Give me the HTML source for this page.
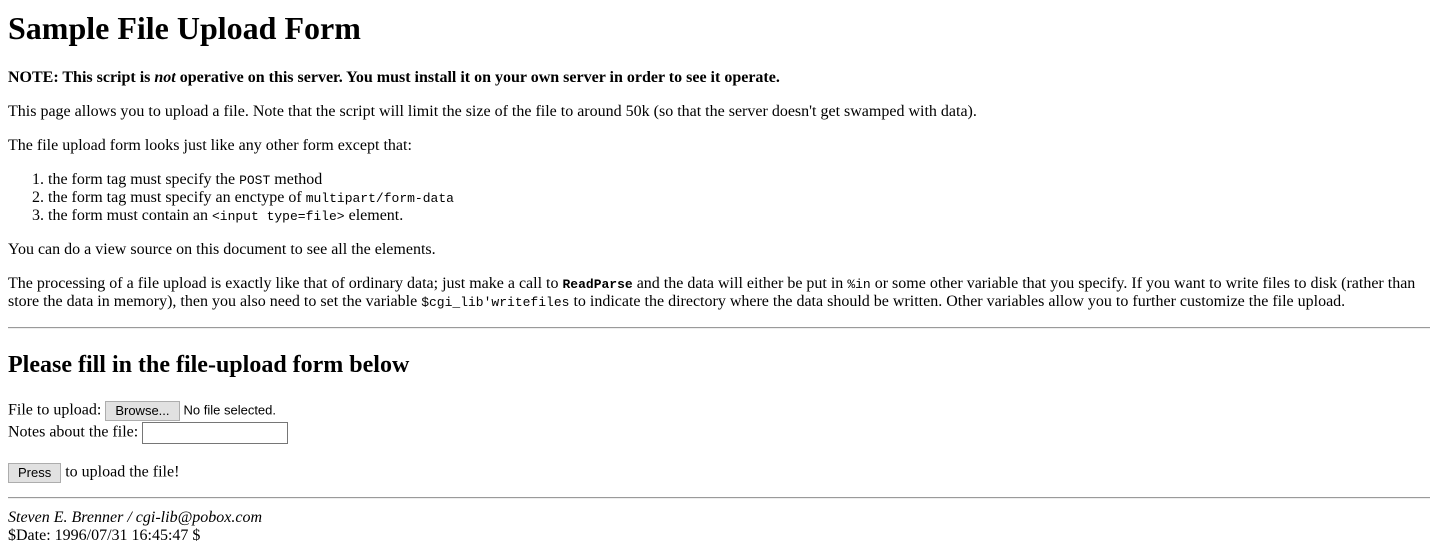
<!DOCTYPE html>
<html><head><meta charset="utf-8"><style>
body{margin:0;width:1440px;height:552px;font-family:"Liberation Serif",serif;font-size:16px;color:#000;background:#fff;position:relative;overflow:hidden}
.a{position:absolute;left:8px;line-height:18px;white-space:nowrap}
h1{position:absolute;left:8px;top:10px;margin:0;font-size:32px;line-height:37px}
h2{position:absolute;left:8px;top:349px;margin:0;font-size:24px;line-height:32px}
code,tt{font-family:"Liberation Mono",monospace;font-size:13px}
hr{position:absolute;left:8px;width:1422px;margin:0;border:0;border-top:1px solid #9a9a9a;border-bottom:1px solid #eee;height:0}
.btn{display:inline-block;font-family:"Liberation Sans",sans-serif;font-size:13px;background:#e1e1e1;border:1px solid #adadad;height:18px;line-height:18px;padding:0 9px;vertical-align:middle;box-sizing:border-box}
.sm{font-family:"Liberation Sans",sans-serif;font-size:13px}
.inp{display:inline-block;width:146px;height:22px;border:1px solid #767676;box-sizing:border-box;vertical-align:middle}
</style></head><body>
<h1>Sample File Upload Form</h1>
<div class="a" style="top:69px"><b>NOTE: This script is <i>not</i> operative on this server. You must install it on your own server in order to see it operate.</b></div>
<div class="a" style="top:103px">This page allows you to upload a file. Note that the script will limit the size of the file to around 50k (so that the server doesn't get swamped with data).</div>
<div class="a" style="top:137px">The file upload form looks just like any other form except that:</div>
<div class="a" style="top:171px;left:32px">1. the form tag must specify the <code>POST</code> method</div>
<div class="a" style="top:189px;left:32px">2. the form tag must specify an enctype of <code>multipart/form-data</code></div>
<div class="a" style="top:207px;left:32px">3. the form must contain an <code>&lt;input type=file&gt;</code> element.</div>
<div class="a" style="top:241px">You can do a view source on this document to see all the elements.</div>
<div class="a" style="top:275px">The processing of a file upload is exactly like that of ordinary data; just make a call to <code><b>ReadParse</b></code> and the data will either be put in <code>%in</code> or some other variable that you specify. If you want to write files to disk (rather than</div>
<div class="a" style="top:293px">store the data in memory), then you also need to set the variable <code>$cgi_lib'writefiles</code> to indicate the directory where the data should be written. Other variables allow you to further customize the file upload.</div>
<hr style="top:327px">
<h2>Please fill in the file-upload form below</h2>
<div class="a" style="top:401px">File to upload: <span class="btn" style="height:20px;line-height:18px">Browse...</span> <span class="sm">No file selected.</span></div>
<div class="a" style="top:422px">Notes about the file: <span class="inp"></span></div>
<div class="a" style="top:463px"><span class="btn" style="height:20px">Press</span> to upload the file!</div>
<hr style="top:497px">
<div class="a" style="top:509px"><i>Steven E. Brenner / cgi-lib@pobox.com</i></div>
<div class="a" style="top:527px">$Date: 1996/07/31 16:45:47 $</div>
</body></html>
